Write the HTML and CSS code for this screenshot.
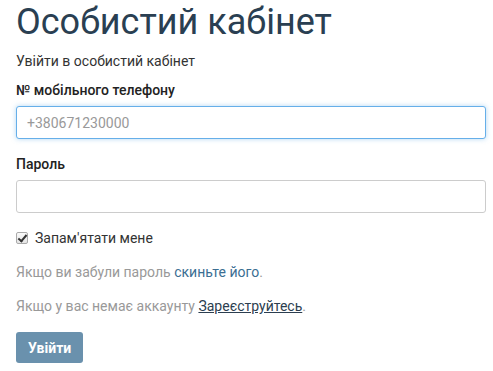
FILE: index.html
```html
<!DOCTYPE html>
<html lang="uk">
<head>
    <meta charset="UTF-8">
    <meta name="viewport" content="width=device-width, initial-scale=1.0">
    <title>Особистий кабінет</title>
    <link rel="stylesheet" href="styles.css">
</head>
<body>

<div class="container">
    <h1>Особистий кабінет</h1>
    <p class="subtitle">Увійти в особистий кабінет</p>
    <form id="loginForm" method="POST" action="login.php">
        <label for="phone">№ мобільного телефону</label>
        <input type="text" id="phone" name="phone" class="focused" placeholder="+380671230000">

        <label for="password" class="spaced">Пароль</label>
        <input type="password" id="password" name="password">

        <div class="remember">
            <input type="checkbox" id="remember" name="remember" checked>
            <span>Запам'ятати мене</span>
        </div>

        <p class="note">Якщо ви забули пароль <a href="#" class="link">скиньте його</a>.</p>
        <p class="note">Якщо у вас немає аккаунту <a href="#" class="link-dark">Зареєструйтесь</a>.</p>

        <button type="submit">Увійти</button>
    </form>
</div>

</body>
</html>
```

FILE: styles.css
```css
body {
    font-family: Roboto, "Liberation Sans", sans-serif;
    font-size: 14px;
    color: #333;
    margin: 0;
    padding: 0 7px 0 16px;
}
.container {
    max-width: 470px;
}
h1 {
    font-size: 36px;
    font-weight: 400;
    color: #2a3f52;
    margin: 0;
    padding-top: 2px;
    line-height: 40px;
}
.subtitle {
    margin: 10px 0 0;
    line-height: 18px;
}
label {
    display: block;
    font-weight: 500;
    color: #222;
    margin-top: 11px;
    line-height: 18px;
}
label.spaced {
    margin-top: 16px;
}
input[type="text"], input[type="password"] {
    display: block;
    box-sizing: border-box;
    width: 100%;
    height: 33px;
    margin-top: 7px;
    padding: 6px 10px;
    font-family: inherit;
    font-size: 14px;
    border: 1px solid #ccc;
    border-radius: 3px;
    outline: none;
}
input::placeholder {
    color: #999;
}
input.focused {
    border-color: #66afe9;
    box-shadow: 0 0 5px rgba(102, 175, 233, 0.5);
}
.remember {
    display: flex;
    align-items: center;
    gap: 7px;
    margin-top: 16px;
    line-height: 18px;
}
.remember input {
    appearance: none;
    position: relative;
    box-sizing: border-box;
    margin: 0;
    width: 12px;
    height: 12px;
    border: 1px solid #aaa;
    border-radius: 2px;
    background: linear-gradient(#fafafa, #e4e4e4);
}
.remember input:checked::after {
    content: "";
    position: absolute;
    left: 3px;
    top: 0;
    width: 3px;
    height: 7px;
    border: solid #333;
    border-width: 0 2px 2px 0;
    transform: rotate(40deg);
}
.note {
    color: #999;
    margin: 16px 0 0;
    line-height: 18px;
}
.link {
    color: #3b6e92;
    text-decoration: none;
}
.link-dark {
    color: #2c3e50;
    text-decoration: underline;
}
button {
    margin-top: 17px;
    padding: 0 12px;
    height: 31px;
    background: #6a91ad;
    color: white;
    font-family: inherit;
    font-size: 14px;
    font-weight: 700;
    border: none;
    border-radius: 3px;
    cursor: pointer;
}
```
